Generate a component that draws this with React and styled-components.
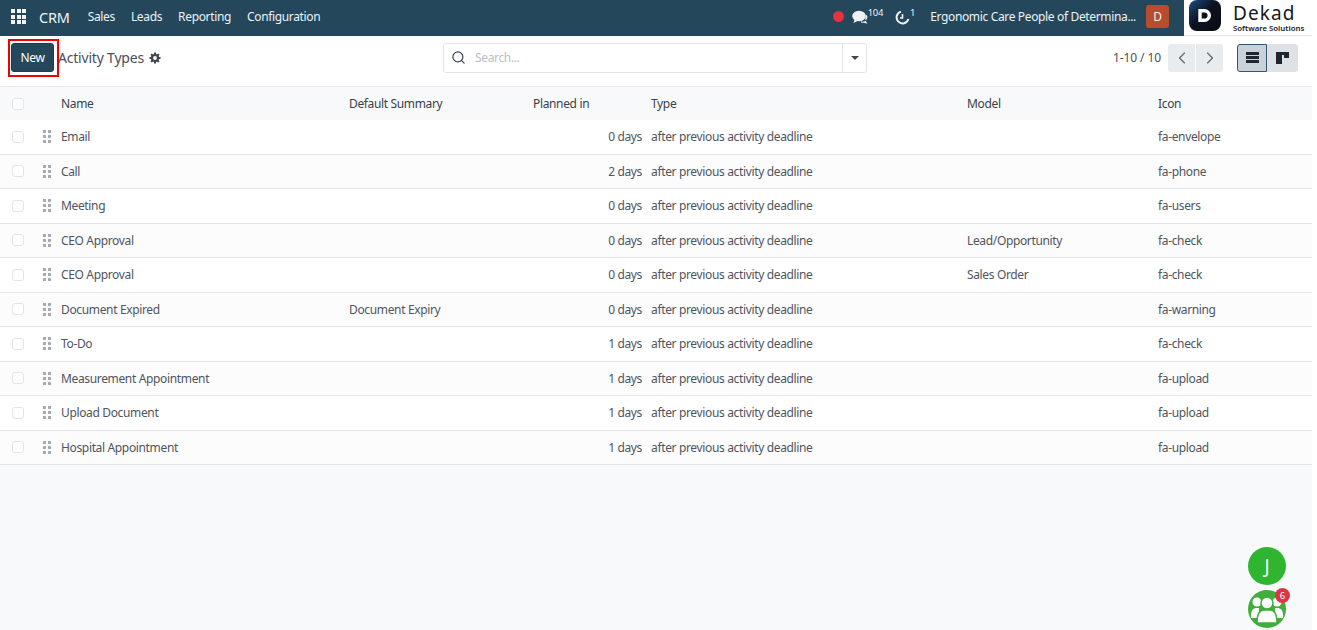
import React from 'react';
import styled, { createGlobalStyle } from 'styled-components';
import { ChevronLeft, ChevronRight, Search } from 'lucide-react';

const GlobalStyle = createGlobalStyle`
  html, body {
    margin: 0;
    padding: 0;
    background: #ffffff;
  }
  *, *::before, *::after {
    box-sizing: border-box;
  }
`;

const Page = styled.div`
  position: relative;
  width: 1312px;
  height: 630px;
  overflow: hidden;
  background: #f8f9fb;
  font-family: "Noto Sans", "Open Sans", sans-serif;
  font-size: 12px;
  letter-spacing: -0.35px;
  color: #4a4f59;
`;

const Navbar = styled.header`
  display: flex;
  align-items: center;
  height: 36px;
  background: #24475c;
  color: #eef2f5;
`;

const AppsButton = styled.div`
  display: grid;
  grid-template-columns: repeat(3, 4px);
  gap: 1.5px;
  margin: -3px 13px 0 11px;
  span {
    width: 4px;
    height: 4px;
    background: #f4f6f8;
  }
`;

const Brand = styled.div`
  font-size: 14.5px;
  letter-spacing: -0.2px;
  margin: -3px 18px 0 0;
`;

const NavMenu = styled.nav`
  display: flex;
  gap: 16px;
  margin-top: -3px;
`;

const NavRight = styled.div`
  display: flex;
  align-items: center;
  margin-left: auto;
  height: 100%;
`;

const RedDot = styled.span`
  width: 11px;
  height: 11px;
  border-radius: 50%;
  background: #e4323f;
  margin: -3px 8px 0 0;
`;

const Counter = styled.div`
  display: flex;
  align-items: flex-start;
  margin: -2px ${(props) => props.$gap}px 0 0;
  sup {
    font-size: 9.5px;
    line-height: 10px;
    margin: -2px 0 0 0;
  }
`;

const CompanyName = styled.div`
  margin: -3px 10px 0 0;
`;

const Avatar = styled.div`
  display: flex;
  align-items: center;
  justify-content: center;
  width: 23px;
  height: 23px;
  margin: -3px 15px 0 0;
  border-radius: 3px;
  background: #b84d2d;
`;

const LogoBox = styled.div`
  display: flex;
  align-items: flex-start;
  width: 128px;
  height: 100%;
  background: #ffffff;
  padding-left: 5px;
  border-bottom: 1px solid #e3e6ea;
`;

const LogoMark = styled.div`
  display: flex;
  align-items: center;
  justify-content: center;
  width: 32px;
  height: 31px;
  border-radius: 8px;
  background: linear-gradient(135deg, #1d4f86 0%, #0c1220 45%, #0a0c12 100%);
  margin-right: 12px;
`;

const LogoText = styled.div`
  display: flex;
  flex-direction: column;
  gap: 1px;
  padding-top: 3.5px;
  color: #15181c;
  letter-spacing: 0;
`;

const LogoName = styled.span`
  font-size: 19px;
  line-height: 19px;
  letter-spacing: 1.1px;
`;

const LogoTagline = styled.span`
  font-size: 7.8px;
  line-height: 9px;
  font-weight: 600;
  white-space: nowrap;
`;

const ControlPanel = styled.div`
  display: grid;
  grid-template-columns: 443px 424px 1fr;
  align-items: center;
  height: 51px;
  padding-bottom: 7px;
  background: #ffffff;
  border-bottom: 1px solid #e9ebef;
`;

const PanelLeft = styled.div`
  display: flex;
  align-items: center;
  padding-left: 11px;
`;

const NewButton = styled.button`
  position: relative;
  width: 43px;
  height: 29px;
  margin-right: 4px;
  border: 1px solid #1d3d50;
  border-radius: 3px;
  background: #24475c;
  color: #ffffff;
  font: inherit;
  letter-spacing: inherit;
  padding: 0;
  &::after {
    content: '';
    position: absolute;
    left: -4px;
    top: -5px;
    width: 51px;
    height: 38px;
    border: 2px solid #f00000;
  }
`;

const Title = styled.div`
  font-size: 14px;
  letter-spacing: -0.2px;
  margin-right: 5px;
`;

const SearchBox = styled.div`
  display: flex;
  align-items: center;
  height: 30px;
  border: 1px solid #e3e6ea;
  border-radius: 3px;
  background: #ffffff;
`;

const SearchInput = styled.div`
  display: flex;
  flex: 1;
  align-items: center;
  gap: 9px;
  padding-left: 7px;
  color: #b9bec7;
  height: 100%;
  svg {
    color: #3f4650;
  }
`;

const SearchCaret = styled.div`
  display: flex;
  align-items: center;
  justify-content: center;
  width: 24px;
  height: 100%;
  border-left: 1px solid #e3e6ea;
  &::before {
    content: '';
    border-left: 4px solid transparent;
    border-right: 4px solid transparent;
    border-top: 4px solid #3f4650;
  }
`;

const PanelRight = styled.div`
  display: flex;
  align-items: center;
  justify-content: flex-end;
  padding-right: 14px;
`;

const PagerText = styled.div`
  margin-right: 7px;
  letter-spacing: -0.1px;
`;

const PagerGroup = styled.div`
  display: flex;
  gap: 1px;
  margin-right: 14px;
`;

const PagerButton = styled.div`
  display: flex;
  align-items: center;
  justify-content: center;
  width: 27px;
  height: 28px;
  background: #e9ecef;
  color: #5d6570;
  border-radius: ${(props) => (props.$side === 'left' ? '3px 0 0 3px' : '0 3px 3px 0')};
`;

const ViewButton = styled.div`
  display: flex;
  align-items: center;
  justify-content: center;
  width: ${(props) => (props.$active ? '30px' : '31px')};
  height: 28px;
  background: ${(props) => (props.$active ? '#c9d2da' : '#dee2e6')};
  border: 1px solid ${(props) => (props.$active ? '#33556b' : '#dee2e6')};
  border-radius: ${(props) => (props.$active ? '3px 0 0 3px' : '0 3px 3px 0')};
`;

const ListIcon = styled.div`
  display: flex;
  flex-direction: column;
  gap: 1px;
  width: 13px;
  span {
    height: 3px;
    background: #20262e;
  }
`;

const Row = styled.div`
  display: grid;
  grid-template-columns: 61px 288px 184px 118px 316px 191px 1fr;
  align-items: center;
  height: ${(props) => (props.$head ? '33px' : '34.5px')};
  background: ${(props) => (props.$head ? '#f8f9fb' : props.$odd ? '#ffffff' : '#fcfcfd')};
  border-bottom: ${(props) => (props.$head ? '0' : '1px solid #e2e5e9')};
  color: ${(props) => (props.$head ? '#3b3f47' : '#4f545e')};
`;

const SelectCell = styled.div`
  display: flex;
  align-items: center;
  padding-left: 12px;
`;

const Checkbox = styled.span`
  width: 12px;
  height: 12px;
  border: 1px solid #e1e4e8;
  border-radius: 3px;
  background: #ffffff;
`;

const DragHandle = styled.span`
  display: grid;
  grid-template-columns: repeat(2, 3px);
  gap: 2px;
  margin-left: 19px;
  i {
    width: 3px;
    height: 3px;
    background: #a6abb3;
  }
`;

const PlannedCell = styled.div`
  text-align: right;
  padding-right: 9px;
`;

const Fab = styled.div`
  position: absolute;
  left: 1248px;
  width: 38px;
  height: 38px;
  border-radius: 50%;
  display: flex;
  align-items: center;
  justify-content: center;
  color: #ffffff;
  top: ${(props) => props.$top}px;
  background: ${(props) => props.$color};
  font-size: 19px;
  letter-spacing: 0;
`;

const FabBadge = styled.span`
  position: absolute;
  right: -4px;
  top: -2px;
  width: 15px;
  height: 15px;
  border-radius: 50%;
  background: #dc3545;
  color: #ffffff;
  font-size: 9.5px;
  line-height: 15px;
  text-align: center;
`;

const rows = [
  ['Email', '', '0 days', '', 'fa-envelope'],
  ['Call', '', '2 days', '', 'fa-phone'],
  ['Meeting', '', '0 days', '', 'fa-users'],
  ['CEO Approval', '', '0 days', 'Lead/Opportunity', 'fa-check'],
  ['CEO Approval', '', '0 days', 'Sales Order', 'fa-check'],
  ['Document Expired', 'Document Expiry', '0 days', '', 'fa-warning'],
  ['To-Do', '', '1 days', '', 'fa-check'],
  ['Measurement Appointment', '', '1 days', '', 'fa-upload'],
  ['Upload Document', '', '1 days', '', 'fa-upload'],
  ['Hospital Appointment', '', '1 days', '', 'fa-upload'],
];

function ChatIcon() {
  return (
    <svg width="16" height="15" viewBox="0 0 16 15" fill="#eef2f5">
      <ellipse cx="7" cy="6" rx="6.8" ry="5.3" />
      <path d="M2.5 9.5L1.5 13l4-2z" />
      <path d="M9 11.5c2 .4 3.5 0 4.5-.8l2 3-3.5-1c-1 .3-2 .2-3-.3z" />
      <path d="M14 4.5c1.5 1.2 2 3 .6 5l-1.4 1z" />
    </svg>
  );
}

function ClockIcon() {
  return (
    <svg width="15" height="15" viewBox="0 0 15 15" fill="none" stroke="#eef2f5" strokeWidth="2">
      <path d="M6 1.6A6 6 0 1 0 13.4 9" />
      <path d="M7.5 4v4H5" strokeWidth="1.6" />
    </svg>
  );
}

function GearIcon() {
  return (
    <svg width="12" height="12" viewBox="0 0 12 12" fill="none" stroke="#3f4650">
      <circle cx="6" cy="6" r="3" strokeWidth="2.2" />
      <path
        d="M6 .5v2M6 9.5v2M.5 6h2M9.5 6h2M2.1 2.1l1.4 1.4M8.5 8.5l1.4 1.4M9.9 2.1L8.5 3.5M3.5 8.5L2.1 9.9"
        strokeWidth="2"
      />
    </svg>
  );
}

function KanbanIcon() {
  return (
    <svg width="13" height="12" viewBox="0 0 13 12" fill="#20262e">
      <rect x="0" y="0" width="13" height="3" />
      <rect x="0" y="3" width="6" height="9" />
      <rect x="8" y="3" width="5" height="3" />
    </svg>
  );
}

function PeopleIcon() {
  return (
    <svg width="34" height="30" viewBox="0 0 34 30" fill="#ffffff">
      <circle cx="7" cy="8" r="4.5" />
      <circle cx="27" cy="8" r="4.5" />
      <path d="M1 22c0-6 2-8 6-8h2v10H1zM33 22c0-6-2-8-6-8h-2v10h8z" />
      <circle cx="17" cy="9" r="6" stroke="#3fae3a" strokeWidth="1.5" />
      <path d="M7 29c0-10 3-13 7-13h6c4 0 7 3 7 13z" stroke="#3fae3a" strokeWidth="1.5" />
    </svg>
  );
}

export default function App() {
  return (
    <Page>
      <GlobalStyle />
      <Navbar>
        <AppsButton>
          {Array.from({ length: 9 }).map((_, i) => (
            <span key={i} />
          ))}
        </AppsButton>
        <Brand>CRM</Brand>
        <NavMenu>
          <span>Sales</span>
          <span>Leads</span>
          <span>Reporting</span>
          <span>Configuration</span>
        </NavMenu>
        <NavRight>
          <RedDot />
          <Counter $gap={12}>
            <ChatIcon />
            <sup>104</sup>
          </Counter>
          <Counter $gap={15}>
            <ClockIcon />
            <sup>1</sup>
          </Counter>
          <CompanyName>Ergonomic Care People of Determina...</CompanyName>
          <Avatar>D</Avatar>
          <LogoBox>
            <LogoMark>
              <svg width="14" height="13" viewBox="0 0 14 13" fill="none" stroke="#ffffff" strokeWidth="3.4">
                <path d="M2 1.7h4.5a4.8 4.8 0 0 1 0 9.6H2z" />
              </svg>
            </LogoMark>
            <LogoText>
              <LogoName>Dekad</LogoName>
              <LogoTagline>Software Solutions</LogoTagline>
            </LogoText>
          </LogoBox>
        </NavRight>
      </Navbar>

      <ControlPanel>
        <PanelLeft>
          <NewButton>New</NewButton>
          <Title>Activity Types</Title>
          <GearIcon />
        </PanelLeft>
        <SearchBox>
          <SearchInput>
            <Search size={15} strokeWidth={2} />
            <span>Search...</span>
          </SearchInput>
          <SearchCaret />
        </SearchBox>
        <PanelRight>
          <PagerText>1-10 / 10</PagerText>
          <PagerGroup>
            <PagerButton $side="left">
              <ChevronLeft size={20} strokeWidth={1.4} />
            </PagerButton>
            <PagerButton $side="right">
              <ChevronRight size={20} strokeWidth={1.4} />
            </PagerButton>
          </PagerGroup>
          <ViewButton $active>
            <ListIcon>
              <span />
              <span />
              <span />
            </ListIcon>
          </ViewButton>
          <ViewButton>
            <KanbanIcon />
          </ViewButton>
        </PanelRight>
      </ControlPanel>

      <Row $head>
        <SelectCell>
          <Checkbox />
        </SelectCell>
        <div>Name</div>
        <div>Default Summary</div>
        <div>Planned in</div>
        <div>Type</div>
        <div>Model</div>
        <div>Icon</div>
      </Row>
      {rows.map((row, i) => (
        <Row key={i} $odd={i % 2 === 0}>
          <SelectCell>
            <Checkbox />
            <DragHandle>
              {Array.from({ length: 6 }).map((_, j) => (
                <i key={j} />
              ))}
            </DragHandle>
          </SelectCell>
          <div>{row[0]}</div>
          <div>{row[1]}</div>
          <PlannedCell>{row[2]}</PlannedCell>
          <div>after previous activity deadline</div>
          <div>{row[3]}</div>
          <div>{row[4]}</div>
        </Row>
      ))}

      <Fab $top={547} $color="#2fb52f">J</Fab>
      <Fab $top={590} $color="#3fae3a">
        <PeopleIcon />
        <FabBadge>6</FabBadge>
      </Fab>
    </Page>
  );
}
